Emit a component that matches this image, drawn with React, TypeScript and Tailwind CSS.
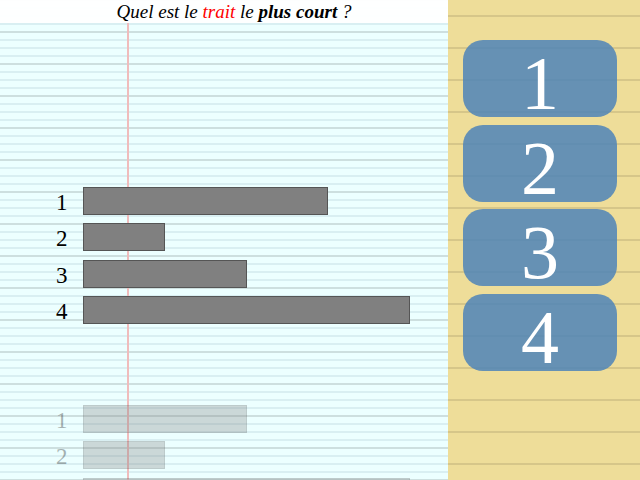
type Trait = { id: number; size: string };

const current: Trait[] = [
  { id: 1, size: "w-3/4" },
  { id: 2, size: "w-1/4" },
  { id: 3, size: "w-1/2" },
  { id: 4, size: "w-full" },
];

const upcoming: Trait[] = [
  { id: 1, size: "w-1/2" },
  { id: 2, size: "w-1/4" },
  { id: 3, size: "w-full" },
  { id: 4, size: "w-3/4" },
];

function Traits({ items, faded = false }: { items: Trait[]; faded?: boolean }) {
  return (
    <ol
      className={`flex h-[137px] shrink-0 flex-col justify-between pr-[38px] ${faded ? "opacity-30" : ""}`}
    >
      {items.map((item) => (
        <li key={item.id} className="flex h-7">
          <span className="w-[83px] shrink-0 pl-14 text-[23px] leading-8">{item.id}</span>
          <div className="flex-1">
            <div className={`h-7 border border-[#555555] bg-[#808080] ${item.size}`} />
          </div>
        </li>
      ))}
    </ol>
  );
}

// Seyès ruled paper: a red margin, a strong line every 32px and fine lines every 8px.
const paper =
  "bg-[linear-gradient(90deg,transparent_127px,#f0bcbc_127px,#f0bcbc_129px,transparent_129px),repeating-linear-gradient(180deg,#cddfdf_0px,#cddfdf_1px,transparent_1px,transparent_31px,#cddfdf_31px,#cddfdf_32px),repeating-linear-gradient(180deg,#d9eff2_0px,#d9eff2_1px,#ecffff_1px,#ecffff_7px,#d9eff2_7px,#d9eff2_8px)]";

const notepad =
  "bg-[repeating-linear-gradient(180deg,#eedd99_0px,#eedd99_15px,#d6c689_15px,#d6c689_17px,#eedd99_17px,#eedd99_32px)]";

export default function App() {
  return (
    <div className="flex h-screen overflow-hidden font-['Liberation_Serif',serif] text-black">
      <main className={`flex w-[70%] flex-col overflow-hidden ${paper}`}>
        <h1 className="h-[23px] shrink-0 bg-white/95 pl-5 text-center text-[19px] leading-[23px] italic">
          Quel est le <span className="text-[#ff0000]">trait</span> le <strong>plus court</strong> ?
        </h1>
        <div className="flex flex-col gap-[81px] pt-[164px]">
          <Traits items={current} />
          <Traits items={upcoming} faded />
        </div>
      </main>
      <aside className={`flex-1 pt-10 pr-[23px] pl-[15px] ${notepad}`}>
        <div className="flex h-[331px] flex-col justify-between">
          {current.map((item) => (
            <button
              key={item.id}
              type="button"
              className="flex h-[77px] w-full items-center justify-center rounded-[20px] bg-[#4d84b9]/85 pt-[9px] text-[76px] leading-none text-white"
            >
              {item.id}
            </button>
          ))}
        </div>
      </aside>
    </div>
  );
}
